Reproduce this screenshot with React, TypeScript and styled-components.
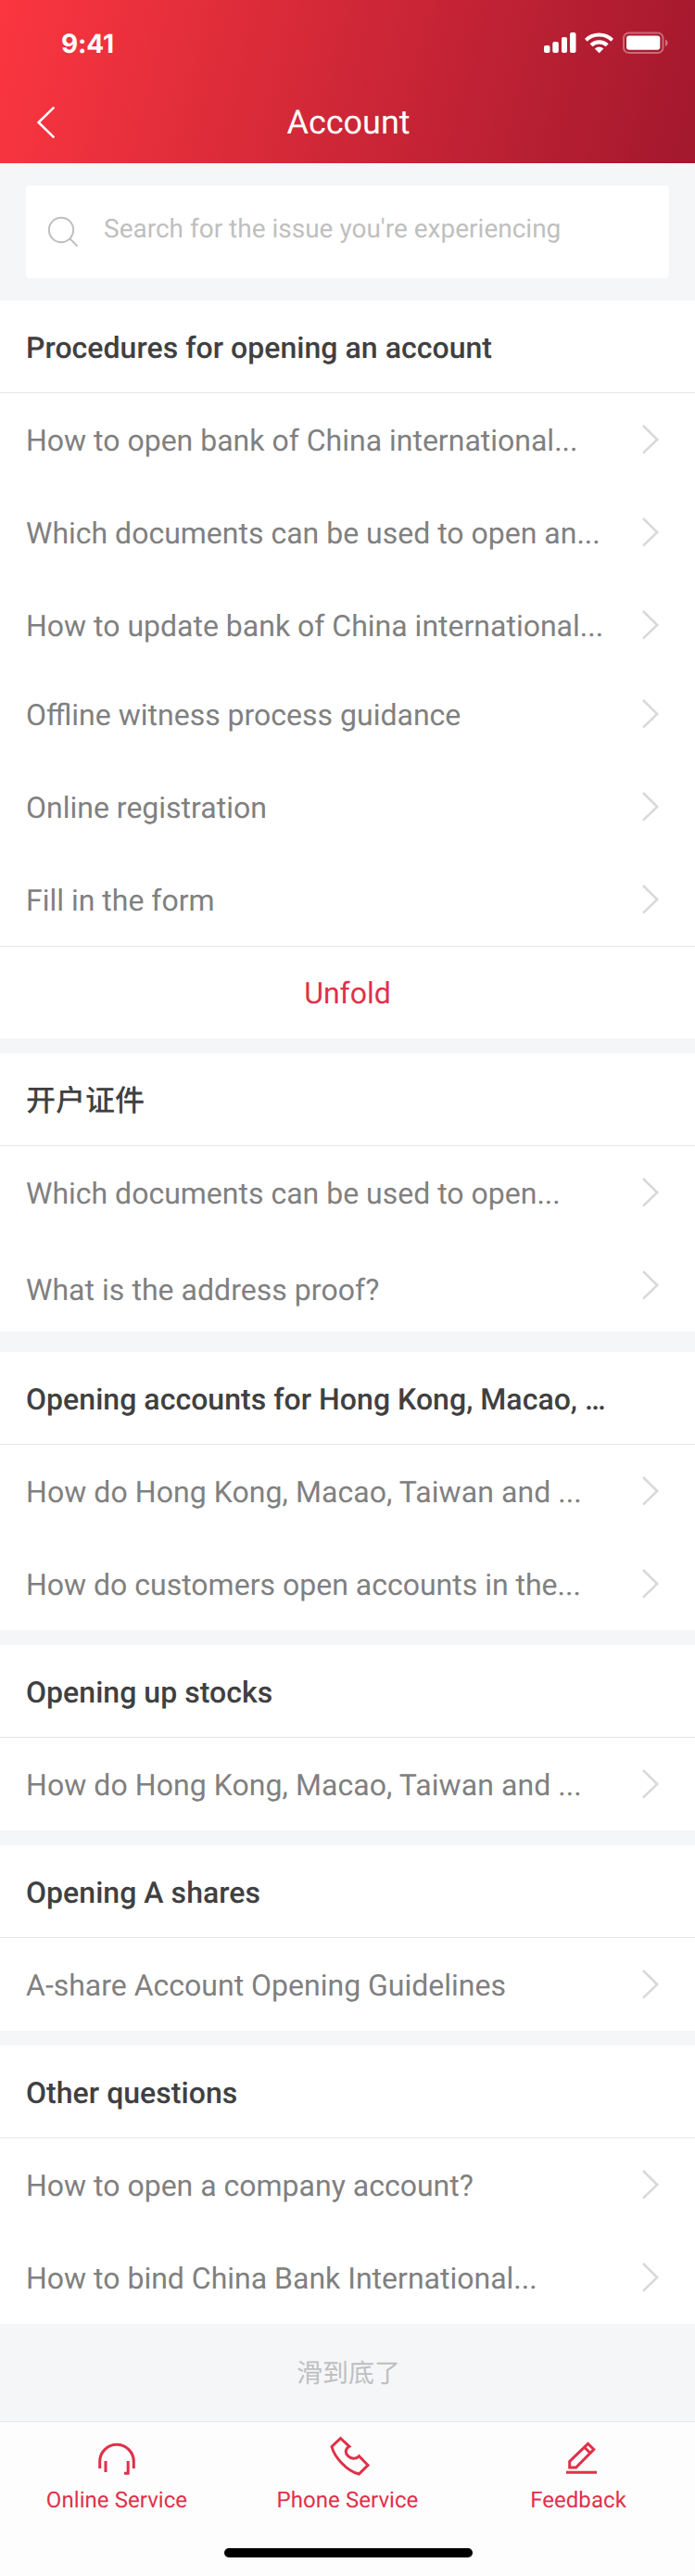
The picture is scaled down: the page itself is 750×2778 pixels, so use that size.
import React from 'react';
import styled, { createGlobalStyle } from 'styled-components';

const GlobalStyle = createGlobalStyle`
  * { box-sizing: border-box; }
  body { margin: 0; background: #f5f6f8; }
`;

const Page = styled.div`
  width: 750px;
  min-height: 2778px;
  background: #f5f6f8;
  display: flex;
  flex-direction: column;
  font-family: Roboto, 'Noto Sans CJK SC', sans-serif;
  text-rendering: geometricPrecision;
`;

const Header = styled.header`
  height: 176px;
  color: #fff;
  background: linear-gradient(104deg, #fb3640 0%, #a3182e 100%);
`;

const StatusBar = styled.div`
  height: 88px;
  display: flex;
  justify-content: space-between;
  padding: 0 29px 0 66px;
`;

const Time = styled.span`
  font: 700 28px/94px Inter, sans-serif;
  letter-spacing: -0.1px;
`;

const StatusIcons = styled.svg`
  margin-top: 32px;
`;

const NavBar = styled.div`
  height: 88px;
  display: grid;
  grid-template-columns: 101px 1fr 99px;
`;

const BackIcon = styled.svg`
  margin: 25px 0 0 38px;
`;

const NavTitle = styled.h1`
  margin: 0;
  font-size: 36px;
  font-weight: 400;
  line-height: 88px;
  text-align: center;
`;

const SearchArea = styled.div`
  height: 148px;
  padding: 24px 28px;
`;

const SearchBox = styled.div`
  height: 100px;
  display: flex;
  background: #fff;
  border-radius: 4px;
  color: #bfbfbf;
  font-size: 28px;
  line-height: 94px;
  white-space: nowrap;
`;

const SearchIcon = styled.svg`
  flex: none;
  margin: 32px 26px 0 22px;
`;

const Section = styled.section<{ $gap?: number }>`
  background: #fff;
  margin-bottom: ${(p) => p.$gap ?? 16}px;
`;

const SectionTitle = styled.h2`
  height: 100px;
  margin: 0;
  padding: 0 94px 0 28px;
  border-bottom: 1px solid #e6e6e6;
  color: #404040;
  font-size: 32px;
  font-weight: 500;
  line-height: 102px;
  letter-spacing: 0.04px;
  white-space: nowrap;
`;

const Row = styled.div<{ $height?: number }>`
  height: ${(p) => p.$height ?? 100}px;
  display: flex;
  justify-content: space-between;
  padding: 0 38px 0 28px;
`;

const RowText = styled.span<{ $drop?: number; $tracking?: number }>`
  padding-top: ${(p) => p.$drop ?? 0}px;
  color: #808080;
  font-size: 32px;
  line-height: 102px;
  letter-spacing: ${(p) => p.$tracking ?? 0}px;
  white-space: nowrap;
`;

const Arrow = styled.svg`
  flex: none;
  margin-top: 34px;
`;

const Unfold = styled.div`
  height: 100px;
  border-top: 1px solid #e6e6e6;
  color: #e0304a;
  font-size: 32px;
  line-height: 100px;
  text-align: center;
`;

const EndNote = styled.div`
  height: 105px;
  padding-left: 2px;
  color: #bfbfbf;
  font-size: 28px;
  line-height: 107px;
  text-align: center;
`;

const TabBar = styled.nav`
  height: 167px;
  border-top: 1px solid #e6e6e6;
  background: #fdfdfd;
  display: flex;
  flex-direction: column;
  align-items: center;
`;

const Tabs = styled.div`
  width: 100%;
  height: 136px;
  display: grid;
  grid-template-columns: 252px 246px 252px;
`;

const Tab = styled.div`
  display: flex;
  flex-direction: column;
  align-items: center;
  color: #e0304a;
  font-size: 24px;
  line-height: 28px;
  letter-spacing: 0.06px;
`;

const TabIcon = styled.svg`
  width: 48px;
  height: 48px;
  margin: 14px 0 8px;
  fill: none;
  stroke: currentColor;
  stroke-width: 3;
`;

const HomeIndicator = styled.div`
  width: 268px;
  height: 10px;
  margin-left: 2px;
  border-radius: 5px;
  background: #000;
`;

interface Item {
  text: string;
  height?: number;
  drop?: number;
  tracking?: number;
}

interface Group {
  title: string;
  items: Item[];
  unfold?: boolean;
  gap?: number;
}

const groups: Group[] = [
  {
    title: 'Procedures for opening an account',
    unfold: true,
    items: [
      { text: 'How to open bank of China international...' },
      { text: 'Which documents can be used to open an...' },
      { text: 'How to update bank of China international...', height: 96 },
      { text: 'Offline witness process guidance' },
      { text: 'Online registration' },
      { text: 'Fill in the form' },
    ],
  },
  {
    title: '开户证件',
    gap: 22,
    items: [
      { text: 'Which documents can be used to open...' },
      { text: 'What is the address proof?', drop: 4, tracking: 0.04 },
    ],
  },
  {
    title: 'Opening accounts for Hong Kong, Macao, …',
    items: [
      { text: 'How do Hong Kong, Macao, Taiwan and ...', tracking: 0.07 },
      { text: 'How do customers open accounts in the...' },
    ],
  },
  {
    title: 'Opening up stocks',
    items: [{ text: 'How do Hong Kong, Macao, Taiwan and ...', tracking: 0.07 }],
  },
  { title: 'Opening A shares', items: [{ text: 'A-share Account Opening Guidelines' }] },
  {
    title: 'Other questions',
    gap: 0,
    items: [
      { text: 'How to open a company account?' },
      { text: 'How to bind China Bank International...' },
    ],
  },
];

export default function App() {
  return (
    <Page>
      <GlobalStyle />
      <Header>
        <StatusBar>
          <Time>9:41</Time>
          <StatusIcons width="136" height="28" viewBox="585 32 136 28" fill="#fff">
            <rect x="587" y="49" width="6.5" height="8" rx="2" />
            <rect x="596.3" y="45" width="6.5" height="12" rx="2" />
            <rect x="606" y="40" width="6" height="17" rx="2" />
            <rect x="615" y="35" width="6.5" height="22" rx="2" />
            <path d="M631 41.8a22 22 0 0 1 31 0l-2.6 3a18.2 18.2 0 0 0-25.8 0z" />
            <path d="M636.6 47.3a14.5 14.5 0 0 1 20 0l-2.8 3a10.4 10.4 0 0 0-14.4 0z" />
            <path d="M641.8 52.4a7.2 7.2 0 0 1 9.6 0l-4.8 4.8z" />
            <rect x="673" y="35.5" width="42.5" height="21.5" rx="5.5" fill="none" stroke="#fff" strokeWidth="2" opacity="0.35" />
            <rect x="676" y="38.5" width="36.3" height="15.2" rx="3" />
            <path d="M718 42.5q2.6 1 2.6 3.7t-2.6 3.8z" opacity="0.4" />
          </StatusIcons>
        </StatusBar>
        <NavBar>
          <BackIcon width="24" height="38" viewBox="38 113 24 38" fill="none" stroke="#fff" strokeWidth="2.6" strokeLinecap="round">
            <path d="M57.6 116.4 41.6 132l16 15.6" />
          </BackIcon>
          <NavTitle>Account</NavTitle>
        </NavBar>
      </Header>
      <SearchArea>
        <SearchBox>
          <SearchIcon width="36" height="36" viewBox="50 232 36 36" fill="none" stroke="#bfbfbf" strokeWidth="2">
            <circle cx="66" cy="248" r="13.2" />
            <path d="m75.5 257.5 8 8" />
          </SearchIcon>
          Search for the issue you&apos;re experiencing
        </SearchBox>
      </SearchArea>
      {groups.map((group) => (
        <Section key={group.title} $gap={group.gap}>
          <SectionTitle>{group.title}</SectionTitle>
          {group.items.map((item) => (
            <Row key={item.text} $height={item.height}>
              <RowText $drop={item.drop} $tracking={item.tracking}>
                {item.text}
              </RowText>
              <Arrow width="20" height="32" viewBox="0 0 20 32" fill="none" stroke="#d9d9d9" strokeWidth="2.6">
                <path d="M2 1 17.2 16 2 30.6" />
              </Arrow>
            </Row>
          ))}
          {group.unfold && <Unfold>Unfold</Unfold>}
        </Section>
      ))}
      <EndNote>滑到底了</EndNote>
      <TabBar>
        <Tabs>
          <Tab>
            <TabIcon viewBox="102 2626 48 48">
              <path d="M107.7 2662v-7.5a18.3 18.3 0 0 1 36.6 0v7.5M114 2654v12M138.2 2654v13.2H134" />
            </TabIcon>
            Online Service
          </Tab>
          <Tab>
            <TabIcon viewBox="351 2626 48 48">
              <path d="M367.5 2629.5 377 2638.3c-5 3-4.5 7-1.5 10.2s8.5 4 12 .2l9.5 9.8-9.7 9.5c-6.3-1.5-13-6-18.3-11.5s-9.5-12-11-18z" />
            </TabIcon>
            Phone Service
          </Tab>
          <Tab>
            <TabIcon viewBox="600 2626 48 48">
              <path d="M614.7 2661v-6.5l19.8-19.2 6.3 6.2-19.2 19.5zM630.5 2639l6 6M611 2666.3h33" />
            </TabIcon>
            Feedback
          </Tab>
        </Tabs>
        <HomeIndicator />
      </TabBar>
    </Page>
  );
}
